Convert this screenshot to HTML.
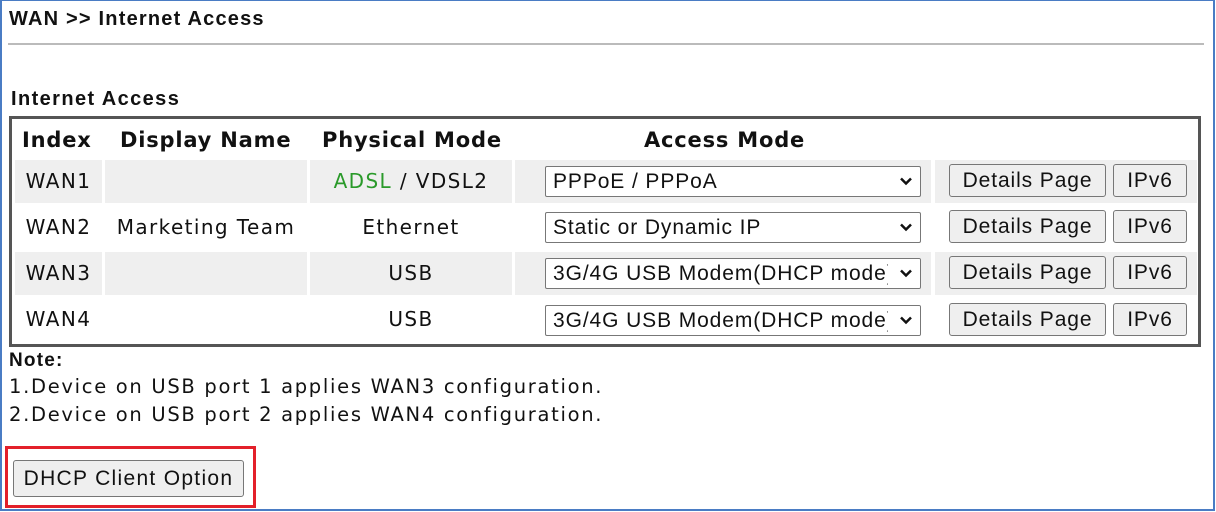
<!DOCTYPE html>
<html><head><meta charset="utf-8"><style>
*{margin:0;padding:0;box-sizing:border-box}
body{width:1216px;height:512px;background:#fff;position:relative;overflow:hidden;font-family:"Liberation Sans",sans-serif;color:#111}
.frame{position:absolute;left:0;top:0;width:1215px;height:511px;border:2px solid #4a7cc4;border-top:1px solid #4a7cc4}
.abs{position:absolute;white-space:nowrap}
.t{font-weight:bold;font-size:20px;letter-spacing:1.2px}
.tbl{position:absolute;left:9px;top:116px;width:1192px;height:231px;border:3px solid #555}
.h{font-family:"DejaVu Sans",sans-serif;font-weight:bold;font-size:21px;top:128px;letter-spacing:0.8px}
.cell{position:absolute;height:43px;font-family:"DejaVu Sans",sans-serif;font-size:20px;line-height:43px;text-align:center;letter-spacing:1.4px}
.g{background:#efefef}
.sel{position:absolute;left:545px;width:376px;height:31px;border:1px solid #777;border-radius:2px;background:#fff;font-size:21px;letter-spacing:0.9px;line-height:29px;padding-left:7px;overflow:hidden;white-space:nowrap}
.sel svg{position:absolute;right:8px;top:10px}
.sel .m{position:absolute;right:0;top:0;width:32px;height:29px;background:#fff}
.btn{position:absolute;height:33px;border:1px solid #777;border-radius:3px;background:#efefef;font-size:21px;letter-spacing:0.9px;line-height:31px;text-align:center;white-space:nowrap}
.note{font-family:"DejaVu Sans",sans-serif;font-size:19.5px;left:9px;letter-spacing:1.7px}
</style></head><body>
<div class="frame"></div>
<div class="abs t" style="left:9px;top:8px">WAN &gt;&gt; Internet Access</div>
<div class="abs" style="left:8px;top:43px;width:1196px;height:2px;background:#bbb"></div>
<div class="abs t" style="left:11px;top:88px;letter-spacing:1.4px">Internet Access</div>
<div class="tbl"></div>
<div class="abs h" style="left:22px">Index</div>
<div class="abs h" style="left:120px">Display Name</div>
<div class="abs h" style="left:322px">Physical Mode</div>
<div class="abs h" style="left:644px">Access Mode</div>

<div class="cell g" style="left:15px;top:160px;width:87px">WAN1</div>
<div class="cell g" style="left:105px;top:160px;width:202px"></div>
<div class="cell g" style="left:310px;top:160px;width:202px"><span style="color:#2a9a2a">ADSL</span> / VDSL2</div>
<div class="cell g" style="left:515px;top:160px;width:416px"></div>
<div class="cell g" style="left:935px;top:160px;width:262px"></div>

<div class="cell" style="left:15px;top:206px;width:87px">WAN2</div>
<div class="cell" style="left:105px;top:206px;width:202px">Marketing Team</div>
<div class="cell" style="left:310px;top:206px;width:202px">Ethernet</div>

<div class="cell g" style="left:15px;top:252px;width:87px">WAN3</div>
<div class="cell g" style="left:105px;top:252px;width:202px"></div>
<div class="cell g" style="left:310px;top:252px;width:202px">USB</div>
<div class="cell g" style="left:515px;top:252px;width:416px"></div>
<div class="cell g" style="left:935px;top:252px;width:262px"></div>

<div class="cell" style="left:15px;top:298px;width:87px">WAN4</div>
<div class="cell" style="left:310px;top:298px;width:202px">USB</div>

<div class="sel" style="top:166px">PPPoE / PPPoA<svg width="12" height="9" viewBox="0 0 12 9"><path d="M1 1.5L6 6.5L11 1.5" stroke="#111" stroke-width="2.5" fill="none"/></svg></div>
<div class="sel" style="top:212px">Static or Dynamic IP<svg width="12" height="9" viewBox="0 0 12 9"><path d="M1 1.5L6 6.5L11 1.5" stroke="#111" stroke-width="2.5" fill="none"/></svg></div>
<div class="sel" style="top:258px">3G/4G USB Modem(DHCP mode)<span class="m"></span><svg width="12" height="9" viewBox="0 0 12 9"><path d="M1 1.5L6 6.5L11 1.5" stroke="#111" stroke-width="2.5" fill="none"/></svg></div>
<div class="sel" style="top:305px">3G/4G USB Modem(DHCP mode)<span class="m"></span><svg width="12" height="9" viewBox="0 0 12 9"><path d="M1 1.5L6 6.5L11 1.5" stroke="#111" stroke-width="2.5" fill="none"/></svg></div>

<div class="btn" style="left:949px;top:164px;width:157px">Details Page</div>
<div class="btn" style="left:1113px;top:164px;width:74px">IPv6</div>
<div class="btn" style="left:949px;top:210px;width:157px">Details Page</div>
<div class="btn" style="left:1113px;top:210px;width:74px">IPv6</div>
<div class="btn" style="left:949px;top:256px;width:157px">Details Page</div>
<div class="btn" style="left:1113px;top:256px;width:74px">IPv6</div>
<div class="btn" style="left:949px;top:303px;width:157px">Details Page</div>
<div class="btn" style="left:1113px;top:303px;width:74px">IPv6</div>

<div class="abs t" style="left:9px;top:350px;font-size:19px">Note:</div>
<div class="abs note" style="top:375px">1.Device on USB port 1 applies WAN3 configuration.</div>
<div class="abs note" style="top:403px">2.Device on USB port 2 applies WAN4 configuration.</div>

<div class="abs" style="left:5px;top:446px;width:251px;height:62px;border:3px solid #e3202a"></div>
<div class="btn" style="left:13px;top:460px;width:231px;height:37px;line-height:35px;letter-spacing:1.3px">DHCP Client Option</div>
</body></html>
